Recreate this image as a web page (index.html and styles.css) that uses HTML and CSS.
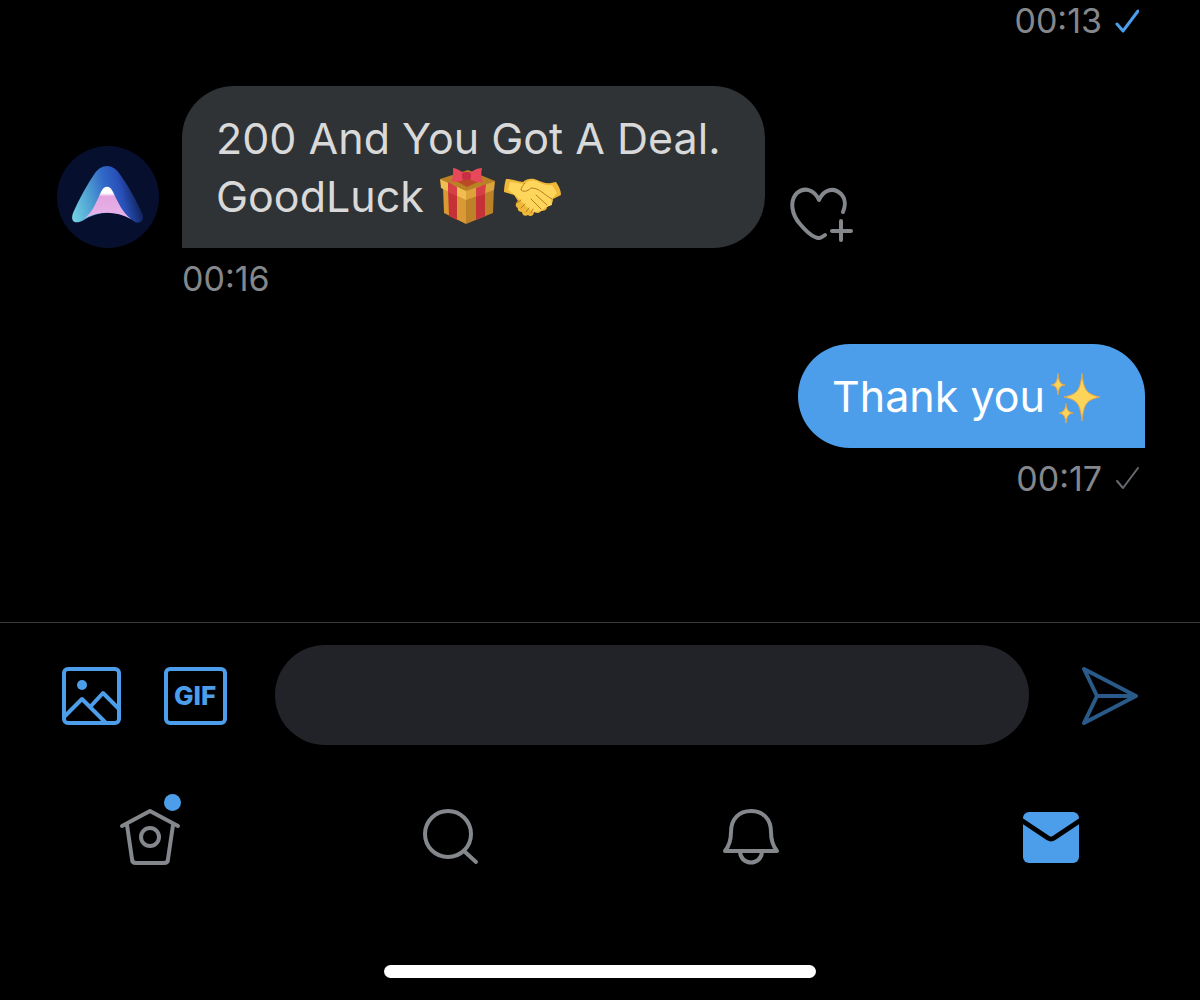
FILE: index.html
```html
<!DOCTYPE html>
<html lang="en">
<head>
  <meta charset="UTF-8" />
  <meta name="viewport" content="width=device-width, initial-scale=1" />
  <title>Messages</title>
  <link rel="stylesheet" href="styles.css">
</head>
<body>
<main class="chat">
  <!-- tail of the previous sent message -->
  <div class="meta sent">
    <time>00:13</time>
    <svg class="check read" viewBox="0 0 24 26" role="img" aria-label="Read"><path d="M2 16l6 7L23 3"/></svg>
  </div>

  <article class="message received">
    <svg class="avatar" viewBox="0 0 102 102" aria-hidden="true">
      <defs>
        <linearGradient id="wing" x1="0" y1="0.9" x2="1" y2="0.7">
          <stop offset="0" stop-color="#72d3e4"/>
          <stop offset="0.3" stop-color="#4f9fd2"/>
          <stop offset="0.55" stop-color="#3268c8"/>
          <stop offset="0.75" stop-color="#2850b8"/>
          <stop offset="1" stop-color="#0d1b4d"/>
        </linearGradient>
        <linearGradient id="peak" x1="0" y1="0" x2="0" y2="1">
          <stop offset="0.2" stop-color="#fff"/>
          <stop offset="0.3" stop-color="#e3a5e0"/>
          <stop offset="1" stop-color="#e8b4ea"/>
        </linearGradient>
      </defs>
      <circle cx="51" cy="51" r="51" fill="#06102e"/>
      <path fill="url(#wing)" d="M50 20c5 0 9 3 12 7 9 12 17 27 23 40 3 7-1 11-7 9-17-12-35-12-53-1-7 3-12 1-9-8 6-14 14-28 22-40 3-4 7-7 12-7z"/>
      <path fill="url(#peak)" d="M28 72c8-6 11-16 16-26 3-7 9-7 12 0 5 10 9 20 18 27-15-8-31-8-46-1z"/>
    </svg>
    <div class="bubble">200 And You Got A Deal.<br>GoodLuck
      <svg class="emoji gift" viewBox="0 0 56 58" role="img" aria-label="gift">
        <path fill="#d99a35" d="M3 20l23 9v28L4 46z"/>
        <path fill="#bd8128" d="M26 29l28-9-1 26-27 11z"/>
        <path fill="#c43238" d="M8 22l9 5v26l-8-4zM36 26l9-4v27l-9 4z"/>
        <path fill="#b98126" d="M0 12L28 3l27 11-29 11z"/>
        <path fill="#f0bd50" d="M0 12l26 12v9L1 21z"/>
        <path fill="#dda33b" d="M26 24l29-10-1 9-28 10z"/>
        <path fill="#d63f45" d="M8 15l9 5v9l-9-4zM36 21l10-4-1 10-9 3z"/>
        <path fill="#b94a25" d="M16 14l10-4 12 5-11 5z"/>
        <path fill="#e8495a" d="M25 6C20 4 16 1 13 1c0 5 1 8-2 13 5 2 10 0 14-2h4c4 2 9 4 14 3-2-6-2-9-1-14-5 0-9 3-13 5z"/>
        <rect x="22" y="5" width="9" height="8" rx="3" fill="#c92e45"/>
      </svg><svg class="emoji shake" viewBox="0 0 57 39" role="img" aria-label="handshake">
        <path fill="#efb838" d="M2 1c5 0 10 2 17 3 4-4 10-4 14-2 5 2 9 4 14 3l5-1c3 4 5 9 5 13l-8 4c0 5-3 7-6 8 0 3-3 4-6 4-2 3-5 2-7 1 0 4-4 5-6 3-3 2-6 0-6-3-3 0-5-2-4-4-3-1-3-5 0-7L10 17 0 14C0 9 1 4 2 1z"/>
        <path fill="#ffd65c" d="M20 6c4-4 9-4 13-3 4 3 9 5 15 4l5 8-6 7 1 5-6 2-5 4-9 1-8-8-9-9-7-5 2-8z"/>
        <g fill="none" stroke="#b97a20" stroke-width="1" stroke-linecap="round">
          <path d="M21 5c-2 2-4 5-4 7 4 3 8 0 10-2 9 0 13 7 21 11M32 17l11 10M27 21l10 10M13 25l4-3M17 30l4-4M22 34l3-4M27 35l2-4"/>
        </g>
      </svg>
    </div>
    <button class="react" type="button" aria-label="Add reaction">
      <svg viewBox="0 0 64 58">
        <path d="M53 26c3-7 2-14-2-18-7-7-17-5-22 6C24 3 14 1 7 7-1 15 2 29 10 38c5 6 10 11 15 13 4 2 6 1 10-2M51 35v19M42 45h19"/>
      </svg>
    </button>
    <div class="meta"><time>00:16</time></div>
  </article>

  <article class="message sent">
    <div class="bubble">Thank you<svg class="emoji sparkles" viewBox="0 0 52 52" role="img" aria-label="sparkles">
        <g fill="#fdd45a" stroke="#dfa64a" stroke-width="1">
          <path d="M33 1c2 16 4 20 18 23-14 3-16 7-18 24-2-17-4-21-18-24 14-3 16-7 18-23z"/>
          <path d="M9 1c1 8 2 10 7 11-5 1-6 2-7 10-1-8-2-9-7-10 5-1 6-3 7-11z"/>
          <path d="M17 31c1 6 2 8 7 9-5 1-6 3-7 10-1-7-2-9-7-10 5-1 6-3 7-9z"/>
        </g>
      </svg></div>
    <div class="meta">
      <time>00:17</time>
      <svg class="check" viewBox="0 0 24 26" role="img" aria-label="Sent"><path d="M2 15l6 7L23 2"/></svg>
    </div>
  </article>
</main>

<form class="composer">
  <button class="photo" type="button" aria-label="Add photo">
    <svg viewBox="0 0 60 60">
      <rect x="3" y="4" width="55" height="54" rx="4"/>
      <path d="M4 51l17-17 23 23M30 41l12-13 15 15"/>
      <circle class="dot" cx="21" cy="20" r="5"/>
    </svg>
  </button>
  <button class="gif" type="button" aria-label="Add GIF">
    <svg viewBox="0 0 64 60">
      <rect x="3" y="4" width="59" height="54" rx="4"/>
      <text x="32" y="40" text-anchor="middle">GIF</text>
    </svg>
  </button>
  <input type="text" aria-label="Message">
  <button class="send" type="submit" aria-label="Send">
    <svg viewBox="0 0 58 60"><path d="M3 4l52 27L3 58l13-27zM16 31h39"/></svg>
  </button>
</form>

<nav class="tabs">
  <a href="#home" aria-label="Home">
    <svg viewBox="0 0 64 64">
      <path d="M4 21L32 6l28 15M9 20l5 34c0 3 2 4 4 4h28c2 0 4-1 4-4l5-34"/>
      <circle cx="32" cy="32" r="9"/>
    </svg>
    <span class="badge"></span>
  </a>
  <a href="#search" aria-label="Search">
    <svg viewBox="0 0 64 64"><circle cx="30" cy="29" r="23"/><path d="M46 46l12 11"/></svg>
  </a>
  <a href="#notifications" aria-label="Notifications">
    <svg viewBox="0 0 64 64">
      <path d="M7 46c4-5 6-10 6-19C13 14 21 6 33 6s20 8 20 21c0 9 2 14 6 19zM22 47c1 14 21 14 22 0"/>
    </svg>
  </a>
  <a class="active" href="#messages" aria-label="Messages">
    <svg viewBox="0 0 64 64">
      <rect class="envelope" x="5" y="7" width="56" height="51" rx="6"/>
      <path class="fold" d="M3 15l27 18q3 2 6 0l27-18"/>
    </svg>
  </a>
</nav>
<div class="home-bar"></div>
</body>
</html>
```
FILE: styles.css
```css
:root {
  --bg: #000000;
  --blue: #4c9eeb;
  --blue-dim: #295a8a;
  --grey: #84878b;
  --bubble: #2f3336;
  --field: #222328;
  --font: Inter, "Noto Sans", sans-serif;
}

* {
  box-sizing: border-box;
}

body {
  margin: 0;
  min-height: 100vh;
  display: flex;
  flex-direction: column;
  background: var(--bg);
  color: #d9d9d9;
  font-family: var(--font);
}

svg {
  display: block;
  fill: none;
  stroke-linecap: round;
  stroke-linejoin: round;
}

button {
  padding: 0;
  border: 0;
  background: none;
  flex: none;
}

/* conversation */
.chat {
  flex: 1;
  display: flex;
  flex-direction: column;
  justify-content: flex-end;
  gap: 45px;
  padding: 0 55px 123px 57px;
}

.message {
  display: grid;
  row-gap: 11px;
  align-items: end;
}

.message.received {
  grid-template-columns: 102px auto 64px;
  column-gap: 23px;
  justify-content: start;
}

.message.sent {
  justify-content: end;
}

.avatar {
  width: 102px;
  height: 102px;
}

.bubble {
  padding: 23px 44px 23px 34px;
  border-radius: 52px 52px 52px 0;
  background: var(--bubble);
  font-size: 43px;
  line-height: 58px;
}

.sent .bubble {
  border-radius: 52px 52px 0 52px;
  background: var(--blue);
  color: #ffffff;
}

.emoji {
  display: inline-block;
}

.gift {
  width: 56px;
  height: 58px;
  margin: -12px 8px -4px 4px;
  vertical-align: -9px;
}

.shake {
  width: 57px;
  height: 39px;
  vertical-align: -5px;
}

.sparkles {
  width: 52px;
  height: 52px;
  margin: -6px 0 -4px 4px;
  vertical-align: -9px;
}

.react {
  align-self: end;
  margin: 0 0 4px 2px;
}

.react svg {
  width: 64px;
  height: 58px;
  stroke: var(--grey);
  stroke-width: 4;
}

.meta {
  display: flex;
  align-items: center;
  color: var(--grey);
  font-size: 34px;
  line-height: 40px;
}

.received .meta {
  grid-column: 2;
}

.meta.sent,
.sent .meta {
  justify-content: flex-end;
  gap: 13px;
  padding-right: 6px;
}

.check {
  width: 24px;
  height: 26px;
  stroke: #66696d;
  stroke-width: 2;
}

.check.read {
  stroke: var(--blue);
  stroke-width: 3;
}

/* composer */
.composer {
  display: flex;
  align-items: center;
  padding: 22px 61px 0;
  border-top: 1px solid #3a3b3d;
}

.composer svg {
  stroke: var(--blue);
  stroke-width: 4;
}

.composer input {
  flex: 1;
  min-width: 0;
  height: 100px;
  margin: 0 52px 0 48px;
  padding: 0 36px;
  border: 0;
  border-radius: 50px;
  background: var(--field);
  color: #ffffff;
  font: 43px var(--font);
}

.photo {
  margin-right: 42px;
}

.photo svg {
  width: 60px;
  height: 60px;
}

.photo .dot {
  fill: var(--blue);
  stroke: none;
}

.gif svg {
  width: 64px;
  height: 60px;
}

.gif text {
  fill: var(--blue);
  stroke: none;
  font: 800 26px var(--font);
}

.composer .send svg {
  width: 58px;
  height: 60px;
  stroke: var(--blue-dim);
}

/* bottom tabs */
.tabs {
  display: grid;
  grid-template-columns: repeat(4, 1fr);
  justify-items: center;
  padding: 60px 0 96px;
}

.tabs a {
  position: relative;
}

.tabs svg {
  width: 64px;
  height: 64px;
  stroke: var(--grey);
  stroke-width: 4;
}

.badge {
  position: absolute;
  top: -11px;
  right: 1px;
  width: 17px;
  height: 17px;
  border-radius: 50%;
  background: var(--blue);
}

.tabs .envelope {
  fill: var(--blue);
  stroke: none;
}

.tabs .fold {
  stroke: var(--bg);
  stroke-width: 5;
}

.home-bar {
  width: 36%;
  height: 13px;
  margin: 0 auto 22px;
  border-radius: 7px;
  background: #ffffff;
}
```
